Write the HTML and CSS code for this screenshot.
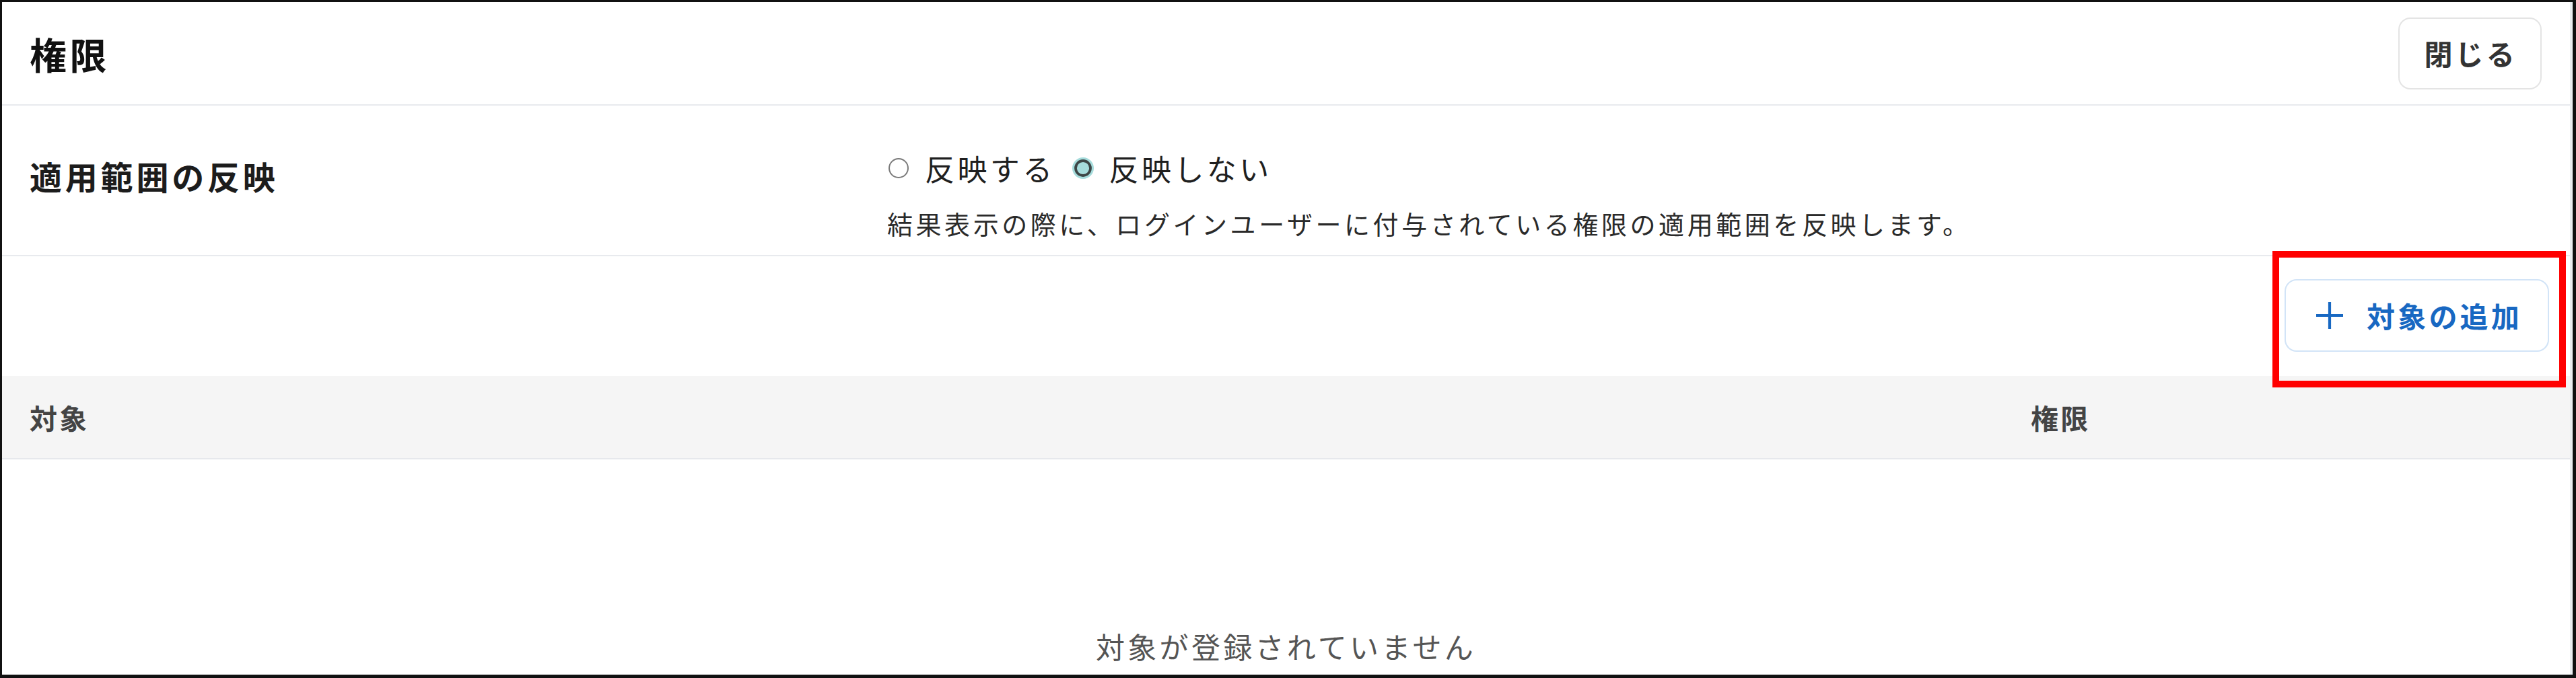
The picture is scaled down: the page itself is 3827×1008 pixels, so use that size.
FILE: index.html
```html
<!DOCTYPE html>
<html lang="ja">
<head>
<meta charset="utf-8">
<title>権限</title>
<link rel="stylesheet" href="styles.css">
</head>
<body>
<div class="frame">
  <div class="panel">
    <header class="head">
      <h1 class="title">権限</h1>
      <button class="btn-close" type="button">閉じる</button>
    </header>

    <section class="setting">
      <div class="setting-label">適用範囲の反映</div>
      <div class="setting-body">
        <div class="radios">
          <label class="radio">
            <svg class="radio-icon" viewBox="0 0 34 34" width="34" height="34"><circle cx="17" cy="17" r="14" fill="#fff" stroke="#7a7a7a" stroke-width="2"/></svg>
            <span class="radio-text">反映する</span>
          </label>
          <label class="radio">
            <svg class="radio-icon" viewBox="0 0 34 34" width="34" height="34"><circle cx="17" cy="17" r="16" fill="#a6dcdc"/><circle cx="17" cy="17" r="11" fill="#a6dcdc" stroke="#3d4646" stroke-width="3.8"/></svg>
            <span class="radio-text">反映しない</span>
          </label>
        </div>
        <p class="desc">結果表示の際に、ログインユーザーに付与されている権限の適用範囲を反映します。</p>
      </div>
    </section>

    <div class="add-row">
      <div class="add-wrap">
        <button class="btn-add" type="button">
          <svg class="plus" viewBox="0 0 44 44" width="44" height="44"><path d="M22 2V42M2 22H42" stroke="#1868c2" stroke-width="4.2" fill="none"/></svg>
          <span>対象の追加</span>
        </button>
        <div class="highlight"></div>
      </div>
    </div>

    <div class="table-head">
      <div class="th">対象</div>
      <div class="th">権限</div>
    </div>

    <div class="empty">対象が登録されていません</div>
  </div>
</div>
</body>
</html>
```

FILE: styles.css
```css
* { box-sizing: border-box; }

html, body {
  margin: 0;
  padding: 0;
  background: #fff;
}

body {
  font-family: "Noto Sans CJK JP", "Noto Sans", sans-serif;
  color: #222;
}

.frame {
  width: 3827px;
  height: 1008px;
  border-style: solid;
  border-color: #111;
  border-width: 3px 5px 5px 3px;
  display: flex;
  overflow: hidden;
}

.panel {
  flex: 1;
  display: flex;
  flex-direction: column;
  border-right: 4px solid #eceef1;
  background: #fff;
  min-width: 0;
}

.head {
  height: 154px;
  flex: none;
  display: flex;
  align-items: center;
  justify-content: space-between;
  padding: 0 42px 0 41px;
  border-bottom: 2px solid #e8eaee;
}

.title {
  margin: 0;
  font-size: 55px;
  line-height: 1;
  font-weight: 700;
  letter-spacing: 0.08em;
  color: #111;
}

.btn-close {
  height: 107px;
  padding: 0 34px 0 36px;
  background: #fff;
  border: 2px solid #e4e4e4;
  border-radius: 18px;
  font-family: inherit;
  font-size: 42px;
  font-weight: 700;
  letter-spacing: 0.1em;
  color: #333;
  line-height: 1;
}

.setting {
  height: 224px;
  flex: none;
  display: grid;
  grid-template-columns: 1274px 1fr;
  padding-left: 41px;
  border-bottom: 2px solid #e8eaee;
}

.setting-label {
  padding-top: 68px;
  font-size: 48px;
  line-height: 72px;
  font-weight: 700;
  letter-spacing: 0.1em;
  color: #1c1c1c;
}

.setting-body {
  padding-top: 61px;
}

.radios {
  display: flex;
  align-items: center;
  gap: 24px;
  height: 64px;
}

.radio {
  display: flex;
  align-items: center;
  gap: 22px;
}

.radio-icon {
  display: block;
  flex: none;
}

.radio-text {
  font-size: 44px;
  line-height: 64px;
  letter-spacing: 0.1em;
  color: #1f1f1f;
}

.desc {
  margin: 21px 0 0;
  font-size: 38px;
  line-height: 58px;
  letter-spacing: 0.12em;
  color: #2a2a2a;
}

.add-row {
  height: 178px;
  flex: none;
  display: flex;
  justify-content: flex-end;
  align-items: flex-start;
  padding: 34px 31px 0 0;
}

.add-wrap {
  position: relative;
}

.btn-add {
  height: 108px;
  display: flex;
  align-items: center;
  gap: 33px;
  padding: 0 38px 0 43px;
  background: #fff;
  border: 2px solid #d2e4f7;
  border-radius: 18px;
  font-family: inherit;
  font-size: 42px;
  font-weight: 700;
  letter-spacing: 0.1em;
  color: #1868c2;
  line-height: 1;
}

.plus {
  display: block;
  flex: none;
}

.highlight {
  position: absolute;
  left: -18px;
  top: -42px;
  right: -25px;
  bottom: -53px;
  border: 10px solid #ff0000;
  pointer-events: none;
}

.table-head {
  height: 124px;
  flex: none;
  display: grid;
  grid-template-columns: 2973px 1fr;
  align-items: center;
  background: #f5f5f5;
  border-bottom: 2px solid #e6e8ec;
}

.th {
  padding-left: 41px;
  font-size: 41px;
  font-weight: 700;
  letter-spacing: 0.08em;
  color: #444;
  line-height: 1;
}

.empty {
  flex: 1;
  padding-top: 245px;
  text-align: center;
  font-size: 43px;
  line-height: 64px;
  letter-spacing: 0.1em;
  color: #555;
}
```
